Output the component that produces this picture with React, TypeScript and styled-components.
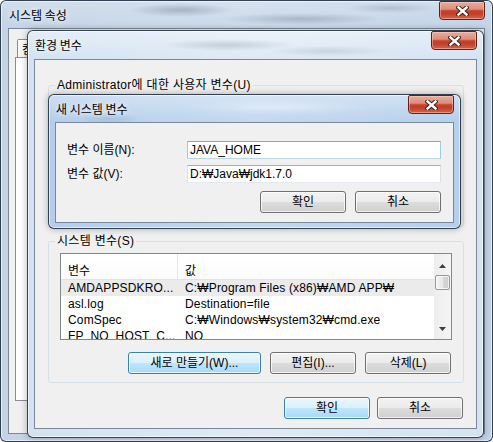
import React from 'react';
import styled, {createGlobalStyle} from 'styled-components';

type Tone = 'back' | 'inactive' | 'active';

const GlobalStyle = createGlobalStyle`
  * {
    box-sizing: border-box;
  }
  html,
  body {
    margin: 0;
    padding: 0;
    background: #ffffff;
  }
  body {
    font-family: 'Liberation Sans', 'Noto Sans CJK KR', sans-serif;
    font-size: 12px;
    color: #000;
  }
`;

// Aero glass, roughly: a base tint plus a few blurred streaks of whatever lies behind.
const glass: Record<Tone, string> = {
  back: `
    radial-gradient(ellipse 70px 9px at 180px 9px, rgba(100, 115, 135, 0.4), transparent 75%),
    radial-gradient(ellipse 110px 8px at 300px 18px, rgba(100, 115, 135, 0.35), transparent 75%),
    radial-gradient(ellipse 60px 7px at 390px 7px, rgba(110, 125, 145, 0.3), transparent 75%),
    linear-gradient(180deg, rgba(255, 255, 255, 0.2) 0px, rgba(255, 255, 255, 0) 28px),
    linear-gradient(90deg, #c4d4e6 0%, #ccdae9 50%, #c2d3e7 100%)
  `,
  inactive: `
    radial-gradient(ellipse 90px 8px at 200px 14px, rgba(120, 135, 155, 0.3), transparent 75%),
    radial-gradient(ellipse 80px 7px at 300px 20px, rgba(120, 135, 155, 0.22), transparent 75%),
    linear-gradient(180deg, rgba(255, 255, 255, 0.45) 0px, rgba(255, 255, 255, 0.1) 28px),
    linear-gradient(90deg, #cddff1 0%, #dbe7f4 50%, #cfe0f2 100%)
  `,
  active: `
    radial-gradient(ellipse 40px 8px at 60px 24px, rgba(90, 115, 150, 0.2), transparent 75%),
    radial-gradient(ellipse 120px 10px at 230px 12px, rgba(255, 255, 255, 0.35), transparent 75%),
    linear-gradient(180deg, rgba(255, 255, 255, 0.35) 0px, rgba(255, 255, 255, 0) 27px),
    linear-gradient(90deg, #b3cdeb 0%, #c3d8f0 50%, #b5cfec 100%)
  `,
};

const Desktop = styled.div`
  position: relative;
  width: 493px;
  height: 442px;
  overflow: hidden;
`;

const Frame = styled.div<{
  $x: number;
  $y: number;
  $w: number;
  $h: number;
  $tone: Tone;
  $pad: number;
  $bottom: number;
}>`
  position: absolute;
  left: ${p => p.$x}px;
  top: ${p => p.$y}px;
  width: ${p => p.$w}px;
  height: ${p => p.$h}px;
  display: flex;
  flex-direction: column;
  padding: 0 ${p => p.$pad}px ${p => p.$bottom}px;
  border: 1px solid rgba(25, 38, 56, 0.85);
  border-radius: 6px;
  background: ${p => glass[p.$tone]};
  box-shadow: inset 0 0 0 1px rgba(255, 255, 255, 0.6)
    ${p => (p.$tone === 'back' ? '' : ', 0 0 7px rgba(0, 0, 0, 0.3)')};
`;

const TitleBar = styled.div<{$h: number}>`
  height: ${p => p.$h}px;
  flex-shrink: 0;
  display: flex;
  align-items: flex-start;
  justify-content: space-between;
  padding-left: 1px;
`;

const Caption = styled.span`
  margin-top: 6px;
  line-height: 16px;
  font-family: 'Noto Sans CJK KR', sans-serif;
  font-size: 12px;
  color: #000;
  text-shadow: 0 0 5px rgba(255, 255, 255, 0.9), 0 0 9px rgba(255, 255, 255, 0.7);
`;

const CloseButton = styled.div`
  width: 46px;
  height: 19px;
  flex-shrink: 0;
  display: flex;
  align-items: center;
  justify-content: center;
  border: 1px solid #5e2117;
  border-radius: 2px 2px 4px 4px;
  background: linear-gradient(
    180deg,
    #e9aa9b 0%,
    #dd8f7c 42%,
    #c5412b 52%,
    #c43f29 70%,
    #d4644c 100%
  );
  box-shadow: inset 0 0 0 1px rgba(255, 220, 210, 0.45);
`;

const ClientBase = styled.div`
  flex: 1;
  min-height: 0;
  overflow: hidden;
  background: #f0f0f0;
  border: 1px solid #7b8898;
`;

const BackClient = styled(ClientBase)`
  display: flex;
  flex-direction: column;
`;

const TabStrip = styled.div`
  display: flex;
  padding: 10px 0 0 8px;
`;

const Tab = styled.div`
  height: 18px;
  padding: 0 4px;
  line-height: 17px;
  white-space: nowrap;
  font-family: 'Noto Sans CJK KR', sans-serif;
  border: 1px solid #898c95;
  border-bottom: none;
  border-radius: 2px 2px 0 0;
  background: linear-gradient(#ffffff, #f4f4f4);
`;

const TabPanel = styled.div`
  margin-left: 6px;
  height: 344px;
  border: 1px solid #898c95;
  background: #ffffff;
`;

const EnvClient = styled(ClientBase)`
  display: flex;
  flex-direction: column;
  padding: 18px 12px 0 13px;
`;

const DialogClient = styled(ClientBase)`
  padding: 18px 0 0 11px;
`;

const Group = styled.fieldset<{$h?: number}>`
  margin: 0;
  padding: 0;
  min-width: 0;
  border: 1px solid #d5dfe5;
  border-radius: 3px;
  ${p => (p.$h ? `height: ${p.$h}px;` : '')}
`;

const Legend = styled.legend`
  margin-left: 6px;
  padding: 0 2px;
  line-height: 14px;
  font-size: 12px;
  letter-spacing: 0.3px;
`;

const GroupBody = styled.div`
  padding: 5px 11px 8px;
`;

const SystemGroup = styled(Group)`
  margin-top: 7px;
`;

const ListBox = styled.div`
  height: 87px;
  display: flex;
  overflow: hidden;
  border: 1px solid #828790;
  background: #ffffff;
`;

const ListMain = styled.div`
  flex: 1;
  min-width: 0;
  display: flex;
  flex-direction: column;
  overflow: hidden;
`;

const HeaderRow = styled.div`
  height: 26px;
  flex-shrink: 0;
  display: flex;
  border-bottom: 1px solid #e2e2e2;
  background: linear-gradient(#ffffff, #fbfbfc);
`;

const HeaderCell = styled.div<{$w?: number}>`
  ${p => (p.$w ? `width: ${p.$w}px; flex-shrink: 0; border-right: 1px solid #e3e6ea;` : 'flex: 1;')}
  display: flex;
  align-items: flex-end;
  padding-left: 7px;
  line-height: 16px;
  white-space: nowrap;
`;

const Row = styled.div<{$selected?: boolean}>`
  height: 16px;
  flex-shrink: 0;
  display: flex;
  background: ${p => (p.$selected ? '#ebebeb' : 'transparent')};
`;

const Cell = styled.div<{$w?: number}>`
  ${p => (p.$w ? `width: ${p.$w}px; flex-shrink: 0;` : 'flex: 1; min-width: 0;')}
  padding-left: 7px;
  line-height: 16px;
  white-space: nowrap;
  overflow: hidden;
  letter-spacing: 0.15px;
`;

const ScrollBar = styled.div`
  width: 17px;
  flex-shrink: 0;
  display: flex;
  flex-direction: column;
  background: linear-gradient(90deg, #ededed, #f5f5f5);
`;

const ScrollArrow = styled.div<{$down?: boolean}>`
  height: 20px;
  flex-shrink: 0;
  display: flex;
  align-items: center;
  justify-content: center;
  padding-top: ${p => (p.$down ? 0 : 3)}px;
`;

const Thumb = styled.div`
  height: 15px;
  margin: 1px 1px 0;
  flex-shrink: 0;
  border: 1px solid #979797;
  border-radius: 2px;
  background: linear-gradient(90deg, #f4f4f4 0%, #e9e9e9 50%, #d9d9d9 51%, #cdcdcd 100%);
  box-shadow: inset 0 0 0 1px rgba(255, 255, 255, 0.7);
`;

const Track = styled.div`
  flex: 1;
`;

const ButtonRow = styled.div<{$gap: number; $mt: number; $pr?: number}>`
  display: flex;
  justify-content: flex-end;
  gap: ${p => p.$gap}px;
  margin-top: ${p => p.$mt}px;
  padding-right: ${p => p.$pr ?? 0}px;
`;

const Button = styled.button<{$w: number; $blue?: boolean}>`
  width: ${p => p.$w}px;
  height: 22px;
  padding: 0;
  margin: 0;
  font-family: 'Liberation Sans', 'Noto Sans CJK KR', sans-serif;
  font-size: 12px;
  line-height: 20px;
  color: #000;
  border: 1px solid ${p => (p.$blue ? '#3c7fb1' : '#707070')};
  border-radius: 3px;
  background: ${p =>
    p.$blue
      ? 'linear-gradient(#eaf6fd 0%, #d9f0fc 50%, #bee6fd 51%, #a7d9f5 100%)'
      : 'linear-gradient(#f2f2f2 0%, #ebebeb 50%, #dddddd 51%, #cfcfcf 100%)'};
  box-shadow: inset 0 0 0 1px rgba(255, 255, 255, 0.75);
`;

const Form = styled.div`
  width: 374px;
`;

const FieldGrid = styled.div`
  display: grid;
  grid-template-columns: 120px 254px;
  row-gap: 6px;
  align-items: center;
`;

const FieldLabel = styled.label`
  line-height: 16px;
  white-space: nowrap;
`;

const TextBox = styled.input<{$focus?: boolean}>`
  width: 254px;
  height: 18px;
  margin: 0;
  padding: 0 2px;
  font-family: 'Liberation Sans', 'Noto Sans CJK KR', sans-serif;
  font-size: 12px;
  color: #000;
  background: #ffffff;
  outline: none;
  border: 1px solid;
  border-color: ${p =>
    p.$focus ? '#7da6d2 #a4c9e3 #b7d9ed #a4c9e3' : '#abadb3 #dbdfe6 #e3e9ef #dbdfe6'};
`;

function CloseGlyph() {
  const d = 'M2.5 1.5 L10.5 8.5 M10.5 1.5 L2.5 8.5';
  return (
    <svg width="13" height="10" viewBox="0 0 13 10">
      <path d={d} stroke="#3a2420" strokeWidth="4.4" strokeLinecap="square" fill="none" />
      <path d={d} stroke="#ffffff" strokeWidth="2.4" strokeLinecap="square" fill="none" />
    </svg>
  );
}

function Arrow({down}: {down?: boolean}) {
  return (
    <svg width="7" height="4" viewBox="0 0 7 4">
      <polygon points={down ? '0,0 7,0 3.5,4' : '0,4 7,4 3.5,0'} fill="#3f3f3f" />
    </svg>
  );
}

interface WindowProps {
  x: number;
  y: number;
  w: number;
  h: number;
  tone: Tone;
  pad: number;
  title: number;
  bottom: number;
  caption: string;
  children: React.ReactNode;
}

function Window({x, y, w, h, tone, pad, title, bottom, caption, children}: WindowProps) {
  return (
    <Frame $x={x} $y={y} $w={w} $h={h} $tone={tone} $pad={pad} $bottom={bottom}>
      <TitleBar $h={title}>
        <Caption>{caption}</Caption>
        <CloseButton>
          <CloseGlyph />
        </CloseButton>
      </TitleBar>
      {children}
    </Frame>
  );
}

const systemVars = [
  {name: 'AMDAPPSDKRO...', value: 'C:₩Program Files (x86)₩AMD APP₩', selected: true},
  {name: 'asl.log', value: 'Destination=file'},
  {name: 'ComSpec', value: 'C:₩Windows₩system32₩cmd.exe'},
  {name: 'FP_NO_HOST_C...', value: 'NO'},
];

export default function App() {
  return (
    <>
      <GlobalStyle />
      <Desktop>
        <Window x={0} y={0} w={493} h={442} tone="back" pad={7} title={27} bottom={7} caption="시스템 속성">
          <BackClient>
            <TabStrip>
              <Tab>컴퓨터 이름</Tab>
            </TabStrip>
            <TabPanel />
          </BackClient>
        </Window>

        <Window x={27} y={30} w={457} h={408} tone="inactive" pad={6} title={28} bottom={8} caption="환경 변수">
          <EnvClient>
            <Group $h={149}>
              <Legend>Administrator에 대한 사용자 변수(U)</Legend>
            </Group>
            <SystemGroup>
              <Legend>시스템 변수(S)</Legend>
              <GroupBody>
                <ListBox>
                  <ListMain>
                    <HeaderRow>
                      <HeaderCell $w={117}>변수</HeaderCell>
                      <HeaderCell>값</HeaderCell>
                    </HeaderRow>
                    {systemVars.map(v => (
                      <Row key={v.name} $selected={v.selected}>
                        <Cell $w={117}>{v.name}</Cell>
                        <Cell>{v.value}</Cell>
                      </Row>
                    ))}
                  </ListMain>
                  <ScrollBar>
                    <ScrollArrow>
                      <Arrow />
                    </ScrollArrow>
                    <Thumb />
                    <Track />
                    <ScrollArrow $down>
                      <Arrow down />
                    </ScrollArrow>
                  </ScrollBar>
                </ListBox>
                <ButtonRow $gap={9} $mt={12} $pr={1}>
                  <Button $w={133} $blue>
                    새로 만들기(W)...
                  </Button>
                  <Button $w={86}>편집(I)...</Button>
                  <Button $w={86}>삭제(L)</Button>
                </ButtonRow>
              </GroupBody>
            </SystemGroup>
            <ButtonRow $gap={7} $mt={14} $pr={1}>
              <Button $w={86} $blue>
                확인
              </Button>
              <Button $w={86}>취소</Button>
            </ButtonRow>
          </EnvClient>
        </Window>

        <Window x={48} y={94} w={413} h={135} tone="active" pad={6} title={27} bottom={5} caption="새 시스템 변수">
          <DialogClient>
            <Form>
              <FieldGrid>
                <FieldLabel>변수 이름(N):</FieldLabel>
                <TextBox $focus readOnly defaultValue="JAVA_HOME" />
                <FieldLabel>변수 값(V):</FieldLabel>
                <TextBox readOnly defaultValue="D:₩Java₩jdk1.7.0" />
              </FieldGrid>
              <ButtonRow $gap={9} $mt={8}>
                <Button $w={86}>확인</Button>
                <Button $w={86}>취소</Button>
              </ButtonRow>
            </Form>
          </DialogClient>
        </Window>
      </Desktop>
    </>
  );
}
